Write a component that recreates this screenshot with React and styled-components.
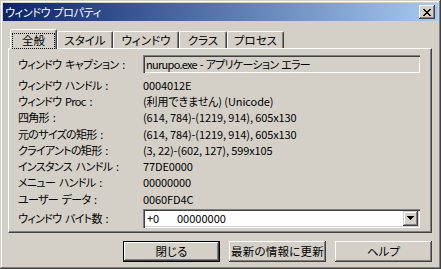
import React from 'react'
import styled, { createGlobalStyle } from 'styled-components'

const GlobalStyle = createGlobalStyle`
  html, body {
    margin: 0;
    padding: 0;
    background: #d4d0c8;
  }
  body {
    font-family: "Noto Sans CJK JP", "Liberation Sans", sans-serif;
    font-size: 11px;
    line-height: 13px;
    font-feature-settings: "palt";
    color: #000;
  }
`

const Window = styled.div`
  width: 441px;
  height: 269px;
  box-sizing: border-box;
  padding: 3px;
  background: #d4d0c8;
  box-shadow: inset -1px -1px #404040, inset 1px 1px #d4d0c8,
    inset -2px -2px #808080, inset 2px 2px #ffffff;
  display: flex;
  flex-direction: column;
`

const TitleBar = styled.div`
  height: 18px;
  display: flex;
  align-items: center;
  justify-content: space-between;
  padding: 0 3px 0 2px;
  background: linear-gradient(to right, #0a246a, #a6caf0);
  color: #fff;
`

const TitleText = styled.span`
  letter-spacing: -0.3px;
  word-spacing: 1px;
`

const CloseButton = styled.div`
  width: 16px;
  height: 14px;
  box-sizing: border-box;
  background: #d4d0c8;
  box-shadow: inset -1px -1px #404040, inset 1px 1px #ffffff,
    inset -2px -2px #808080;
  display: flex;
  align-items: center;
  justify-content: center;
`

const TabStrip = styled.div`
  display: flex;
  align-items: flex-end;
  height: 20px;
  margin-top: 8px;
  margin-bottom: -1px;
  padding-left: 7px;
  position: relative;
  z-index: 1;
`

const Tab = styled.div`
  box-sizing: border-box;
  width: ${p => p.w}px;
  height: ${p => (p.active ? 20 : 17)}px;
  margin-bottom: ${p => (p.active ? 0 : 1)}px;
  background: #d4d0c8;
  border-top: 1px solid #fff;
  border-left: 1px solid #fff;
  border-right: 1px solid #404040;
  border-radius: 2px 2px 0 0;
  box-shadow: inset -1px 0 #808080;
  display: flex;
  align-items: center;
  justify-content: center;
  padding-top: ${p => (p.active ? 1 : 0)}px;
  font-size: 11.5px;
`

const FocusRing = styled.span`
  display: flex;
  align-items: center;
  justify-content: center;
  width: 43px;
  height: 16px;
  box-sizing: border-box;
  border: 1px dotted #000;
  margin-top: 1px;
`

const Panel = styled.div`
  height: 185px;
  margin: 0 6px 0 5px;
  box-sizing: border-box;
  border-top: 1px solid #fff;
  border-left: 1px solid #fff;
  border-right: 1px solid #404040;
  border-bottom: 1px solid #404040;
  box-shadow: inset -1px -1px #808080;
  padding: 6px 11px 0 9px;
  display: flex;
  flex-direction: column;
`

const Row = styled.div`
  display: grid;
  grid-template-columns: 125px 1fr;
  align-items: center;
  height: ${p => p.h}px;
  margin-top: ${p => p.gap || 0}px;
  white-space: nowrap;
`

const Label = styled.span`
  letter-spacing: -0.7px;
  word-spacing: 2px;
`

const Value = styled.span`
  letter-spacing: -0.1px;
`

const ReadOnlyBox = styled.div`
  height: 18px;
  box-sizing: border-box;
  box-shadow: inset 1px 1px #808080, inset 2px 2px #404040,
    inset -1px -1px #ffffff, inset -2px -2px #d4d0c8;
  padding: 0 2px 0 3px;
  display: flex;
  align-items: center;
  overflow: hidden;
  letter-spacing: -0.7px;
  word-spacing: 1px;
`

const Combo = styled.div`
  height: 19px;
  box-sizing: border-box;
  background: #fff;
  box-shadow: inset 1px 1px #808080, inset 2px 2px #404040,
    inset -1px -1px #ffffff, inset -2px -2px #d4d0c8;
  padding: 2px 2px 2px 4px;
  display: flex;
  align-items: center;
`

const ComboIndex = styled.span`
  width: 30px;
`

const ComboText = styled.span`
  flex: 1;
`

const ComboArrow = styled.div`
  width: 15px;
  height: 15px;
  box-sizing: border-box;
  background: #d4d0c8;
  box-shadow: inset -1px -1px #404040, inset 1px 1px #d4d0c8,
    inset -2px -2px #808080, inset 2px 2px #ffffff;
  display: flex;
  align-items: center;
  justify-content: center;
`

const ButtonRow = styled.div`
  display: flex;
  justify-content: flex-end;
  gap: 9px;
  margin-top: 8px;
  padding-right: 6px;
`

const Button = styled.div`
  width: 97px;
  height: 21px;
  box-sizing: border-box;
  background: #d4d0c8;
  display: flex;
  align-items: center;
  justify-content: center;
  white-space: nowrap;
  font-size: 11.5px;
  letter-spacing: ${p => (p.wide ? 0.2 : 0)}px;
  box-shadow: inset -1px -1px #404040, inset 1px 1px #ffffff,
    inset -2px -2px #808080;
  border: ${p => (p.primary ? '1px solid #000' : 'none')};
`

const rows = [
  { label: 'ウィンドウ ハンドル :', value: '0004012E', h: 16, gap: 4 },
  { label: 'ウィンドウ Proc :', value: '(利用できません) (Unicode)', h: 16 },
  { label: '四角形 :', value: '(614, 784)-(1219, 914), 605x130', h: 16 },
  { label: '元のサイズの矩形 :', value: '(614, 784)-(1219, 914), 605x130', h: 18 },
  { label: 'クライアントの矩形 :', value: '(3, 22)-(602, 127), 599x105', h: 15 },
  { label: 'インスタンス ハンドル :', value: '77DE0000', h: 17 },
  { label: 'メニュー ハンドル :', value: '00000000', h: 15 },
  { label: 'ユーザー データ :', value: '0060FD4C', h: 18 }
]

const tabs = [
  { label: '全般', w: 47, active: true },
  { label: 'スタイル', w: 56 },
  { label: 'ウィンドウ', w: 66 },
  { label: 'クラス', w: 48 },
  { label: 'プロセス', w: 57 }
]

const App = () => {
  return (
    <>
      <GlobalStyle />
      <Window>
        <TitleBar>
          <TitleText>ウィンドウ プロパティ</TitleText>
          <CloseButton>
            <svg width="8" height="7" viewBox="0 0 8 7" shapeRendering="crispEdges">
              <path d="M0 0h2v1h-2zM6 0h2v1h-2zM1 1h2v1h-2zM5 1h2v1h-2zM2 2h4v1h-4zM3 3h2v1h-2zM2 4h4v1h-4zM1 5h2v1h-2zM5 5h2v1h-2zM0 6h2v1h-2zM6 6h2v1h-2z" fill="#000" />
            </svg>
          </CloseButton>
        </TitleBar>

        <TabStrip>
          {tabs.map(t => (
            <Tab key={t.label} w={t.w} active={t.active}>
              {t.active ? <FocusRing>{t.label}</FocusRing> : t.label}
            </Tab>
          ))}
        </TabStrip>

        <Panel>
          <Row h={18}>
            <Label>ウィンドウ キャプション :</Label>
            <ReadOnlyBox>nurupo.exe - アプリケーション エラー</ReadOnlyBox>
          </Row>
          {rows.map(r => (
            <Row key={r.label} h={r.h} gap={r.gap}>
              <Label>{r.label}</Label>
              <Value>{r.value}</Value>
            </Row>
          ))}
          <Row h={20}>
            <Label>ウィンドウ バイト数 :</Label>
            <Combo>
              <ComboIndex>+0</ComboIndex>
              <ComboText>00000000</ComboText>
              <ComboArrow>
                <svg width="7" height="4" viewBox="0 0 7 4" shapeRendering="crispEdges">
                  <path d="M0 0h7v1h-7zM1 1h5v1h-5zM2 2h3v1h-3zM3 3h1v1h-1z" fill="#000" />
                </svg>
              </ComboArrow>
            </Combo>
          </Row>
        </Panel>

        <ButtonRow>
          <Button primary>閉じる</Button>
          <Button wide>最新の情報に更新</Button>
          <Button>ヘルプ</Button>
        </ButtonRow>
      </Window>
    </>
  )
}

export default App
